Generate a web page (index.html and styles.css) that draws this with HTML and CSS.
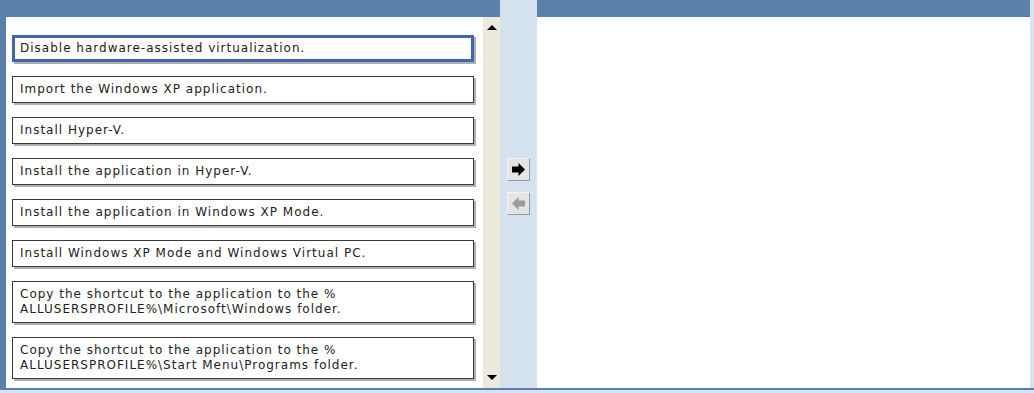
FILE: index.html
```html
<!DOCTYPE html>
<html lang="en">
<head>
  <meta charset="UTF-8">
  <title>Drag and drop answer</title>
  <link rel="stylesheet" href="styles.css">
</head>
<body>
  <div class="frame">
    <!-- source list -->
    <div class="pane pane-left">
      <div class="pane-head"></div>
      <div class="pane-body">
        <div class="list">
          <div class="item item-active">Disable hardware-assisted virtualization.</div>
          <div class="item">Import the Windows XP application.</div>
          <div class="item">Install Hyper-V.</div>
          <div class="item">Install the application in Hyper-V.</div>
          <div class="item">Install the application in Windows XP Mode.</div>
          <div class="item">Install Windows XP Mode and Windows Virtual PC.</div>
          <div class="item">Copy the shortcut to the application to the %<br>ALLUSERSPROFILE%\Microsoft\Windows folder.</div>
          <div class="item">Copy the shortcut to the application to the %<br>ALLUSERSPROFILE%\Start Menu\Programs folder.</div>
        </div>
        <div class="scrollbar">
          <span class="arrow-up"></span>
          <span class="arrow-down"></span>
        </div>
      </div>
    </div>

    <!-- move buttons -->
    <div class="middle">
      <button class="move-btn">
        <svg width="15" height="15" viewBox="0 0 15 15"><path d="M1 4.5h6.5V1l6.5 6.5-6.5 6.5v-3.5H1z" fill="#000"/></svg>
      </button>
      <button class="move-btn">
        <svg width="15" height="15" viewBox="0 0 15 15"><path d="M14 4.5H7.5V1L1 7.5 7.5 14v-3.5H14z" fill="#9a9a9a"/></svg>
      </button>
    </div>

    <!-- answer area -->
    <div class="pane pane-right">
      <div class="pane-head"></div>
      <div class="pane-body"></div>
    </div>
  </div>
  <div class="bottom"></div>
</body>
</html>
```

FILE: styles.css
```css
body {
  margin: 0;
  font-family: 'DejaVu Sans', Verdana, sans-serif;
  background-color: #d6e3f1;
  width: 1034px;
  height: 393px;
  overflow: hidden;
}
.frame {
  display: flex;
  height: 388px;
}
.pane {
  display: flex;
  flex-direction: column;
}
.pane-head {
  height: 17px;
  background-color: #5a80ab; /* steel blue header */
}
.pane-body {
  flex: 1;
  background-color: #ffffff;
}
.pane-left {
  width: 500px;
}
.pane-left .pane-body {
  display: flex;
  border-left: 6px solid #5a80ab;
}
.list {
  flex: 1;
  padding: 18px 0 0 6px;
  display: flex;
  flex-direction: column;
  gap: 14px;
}
.item {
  width: 446px;
  padding: 5px 7px;
  border: 1px solid #3a3a3a;
  box-shadow: 2px 2px 0 #b0b0b0;
  font-size: 12px;
  line-height: 15px;
  color: #222222;
  letter-spacing: 1px;
  background-color: #ffffff;
}
.item-active {
  border: 3px solid #3d65b0;
  padding: 3px 5px;
}
.scrollbar {
  width: 17px;
  background-color: #ede9dc;
  position: relative;
}
.arrow-up,
.arrow-down {
  position: absolute;
  left: 4px;
  width: 0;
  height: 0;
  border-left: 5px solid transparent;
  border-right: 5px solid transparent;
}
.arrow-up {
  top: 8px;
  border-bottom: 5px solid #000000;
}
.arrow-down {
  bottom: 8px;
  border-top: 5px solid #000000;
}
.middle {
  width: 37px;
  padding-top: 158px;
  display: flex;
  flex-direction: column;
  align-items: center;
  gap: 11px;
  background-color: #d4e2f0;
}
.move-btn {
  width: 23px;
  height: 23px;
  padding: 0;
  border: 1px solid #f4f4f4;
  border-right-color: #9a9a9a;
  border-bottom-color: #9a9a9a;
  background-color: #e4e4e4;
  display: flex;
  align-items: center;
  justify-content: center;
}
.pane-right {
  flex: 1;
  margin-right: 4px;
}
.bottom {
  height: 2px;
  background-color: #5a80ab;
}
```
